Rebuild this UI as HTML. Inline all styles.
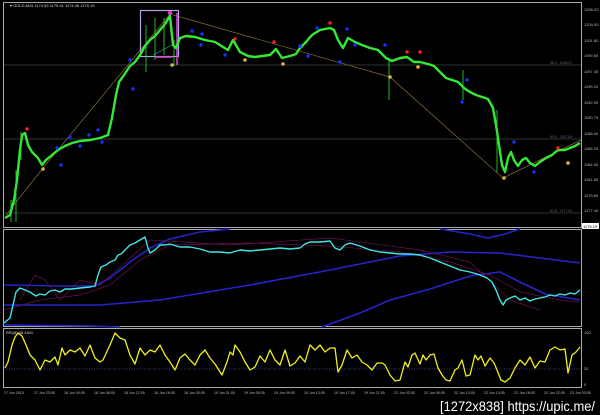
<!DOCTYPE html>
<html><head><meta charset="utf-8"><style>
html,body{margin:0;padding:0;background:#000;width:600px;height:415px;overflow:hidden}
svg{display:block}
.ax{font-family:"Liberation Sans",sans-serif;font-size:4px;fill:#bbb}
</style></head><body>
<svg width="600" height="415" viewBox="0 0 600 415" xmlns="http://www.w3.org/2000/svg">
<rect width="600" height="415" fill="#000"/>
<rect x="3.5" y="2.5" width="578" height="225" fill="none" stroke="#aaa" stroke-width="1"/>
<rect x="3.5" y="229.5" width="578" height="97" fill="none" stroke="#aaa" stroke-width="1"/>
<rect x="3.5" y="328.5" width="578" height="59" fill="none" stroke="#aaa" stroke-width="1"/>
<g stroke="#3a4444" stroke-width="0.8">
<line x1="4" y1="65" x2="581" y2="65"/><line x1="4" y1="139" x2="581" y2="139"/><line x1="4" y1="213" x2="581" y2="213"/>
</g>
<g class="ax" style="font-size:3.5px;fill:#667">
<text x="550" y="64">38.2 - 1198.27</text><text x="550" y="138">50.0 - 1187.64</text><text x="550" y="212">61.8 - 1177.01</text>
</g>
<text x="10" y="7" class="ax" style="font-size:4px;fill:#ddd">▾ GOLD,M15  1174.53  1175.41  1174.46  1175.19</text>
<polyline fill="none" stroke="#8a6d3b" stroke-width="0.7" points="6,215 43,168 170,14 390,77 503,178 581,140"/>
<rect x="140.5" y="10.5" width="38" height="46" fill="none" stroke="#b9a0e0" stroke-width="1.2"/>
<line x1="177" y1="13" x2="177" y2="65" stroke="#e040e0" stroke-width="1.5"/>
<line x1="155" y1="57" x2="172" y2="57" stroke="#e040e0" stroke-width="1.5"/>
<line x1="153" y1="55" x2="172" y2="45" stroke="#3aa" stroke-width="0.6"/>
<polyline fill="none" stroke="#36e836" stroke-width="2.4" stroke-linejoin="round" points="5,218 10,215 14,200 17,180 20,150 22,135 25,133 28,145 32,152 38,158 42,165 46,160 52,155 58,150 65,146 72,143 80,141 90,140 100,138 108,135 112,118 116,95 119,82 124,75 130,66 135,62 140,55 145,46 150,40 155,36 160,30 165,24 170,16 173,45 176,48 180,38 186,36 195,37 205,40 215,42 223,47 228,50 233,40 240,52 248,56 255,57 262,56 270,55 276,49 282,58 290,56 296,54 300,48 306,42 312,35 320,30 330,28 334,30 338,40 343,48 348,38 355,42 362,45 370,48 378,50 386,58 392,61 400,58 407,57 414,62 420,62 428,64 434,66 440,72 446,78 452,80 458,82 464,88 470,92 476,95 482,97 488,99 493,108 496,125 499,145 502,165 505,172 508,158 511,152 514,160 518,166 522,160 526,158 530,163 535,166 540,162 546,158 552,155 558,150 565,150 570,148 575,146 580,143"/>
<g stroke="#2ee02e" stroke-width="0.8">
<line x1="11" y1="200" x2="11" y2="222"/><line x1="16" y1="170" x2="16" y2="222"/><line x1="21" y1="132" x2="21" y2="160"/><line x1="146" y1="25" x2="146" y2="72"/><line x1="155" y1="18" x2="155" y2="60"/><line x1="164" y1="18" x2="164" y2="55"/><line x1="174" y1="40" x2="174" y2="66"/><line x1="389" y1="60" x2="389" y2="100"/><line x1="463" y1="70" x2="463" y2="100"/><line x1="497" y1="110" x2="497" y2="172"/>
</g>
<g fill="#1530ff"><circle cx="57" cy="148" r="1.7"/><circle cx="61" cy="165" r="1.7"/><circle cx="70" cy="137" r="1.7"/><circle cx="80" cy="146" r="1.7"/><circle cx="89" cy="135" r="1.7"/><circle cx="98" cy="130" r="1.7"/><circle cx="102" cy="142" r="1.7"/><circle cx="130" cy="60" r="1.7"/><circle cx="133" cy="89" r="1.7"/><circle cx="192" cy="31" r="1.7"/><circle cx="202" cy="34" r="1.7"/><circle cx="201" cy="45" r="1.7"/><circle cx="225" cy="55" r="1.7"/><circle cx="300" cy="46" r="1.7"/><circle cx="308" cy="56" r="1.7"/><circle cx="317" cy="28" r="1.7"/><circle cx="340" cy="62" r="1.7"/><circle cx="347" cy="29" r="1.7"/><circle cx="355" cy="45" r="1.7"/><circle cx="385" cy="45" r="1.7"/><circle cx="462" cy="102" r="1.7"/><circle cx="467" cy="80" r="1.7"/><circle cx="514" cy="142" r="1.7"/><circle cx="534" cy="172" r="1.7"/><circle cx="568" cy="163" r="1.7"/></g>
<g fill="#ff2020"><circle cx="27" cy="129" r="1.7"/><circle cx="235" cy="39" r="1.7"/><circle cx="274" cy="42" r="1.7"/><circle cx="330" cy="23" r="1.7"/><circle cx="407" cy="52" r="1.7"/><circle cx="420" cy="52" r="1.7"/><circle cx="558" cy="148" r="1.7"/></g>
<g fill="#e0b040"><circle cx="43" cy="169" r="1.8"/><circle cx="172" cy="65" r="1.8"/><circle cx="245" cy="60" r="1.8"/><circle cx="283" cy="64" r="1.8"/><circle cx="390" cy="77" r="1.8"/><circle cx="418" cy="67" r="1.8"/><circle cx="504" cy="178" r="1.8"/><circle cx="568" cy="163" r="1.8"/></g>
<circle cx="170" cy="13" r="2" fill="#e040e0"/>
<g class="ax">
<text x="584" y="11">1206.20</text><text x="584" y="26">1204.00</text><text x="584" y="42">1201.80</text><text x="584" y="57">1199.50</text><text x="584" y="73">1197.30</text><text x="584" y="88">1195.10</text><text x="584" y="104">1192.90</text><text x="584" y="119">1190.70</text><text x="584" y="135">1188.40</text><text x="584" y="150">1186.20</text><text x="584" y="166">1184.00</text><text x="584" y="181">1181.80</text><text x="584" y="197">1179.60</text><text x="584" y="212">1177.40</text>
<text x="584" y="334">100</text><text x="584" y="370">32</text><text x="584" y="386">0</text>
</g>
<rect x="582" y="223" width="17" height="6" fill="#fff"/><text x="583" y="228" class="ax" style="fill:#000">1175.19</text>
<g fill="none" stroke="#2424c8" stroke-width="1.6">
<polyline points="4,285 60,286 95,286 110,278 130,262 150,248 170,239 200,232 230,229"/>
<polyline points="4,305 100,305 160,300 250,285 330,270 400,256 450,252 500,253 540,258 580,263"/>
<polyline points="4,325 90,326 120,327"/>
<polyline points="322,327 360,313 390,300 430,289 470,276 500,272 520,282 545,294 580,300"/>
<polyline points="440,229 470,234 488,238 505,234 520,229"/>
</g>
<g fill="none" stroke="#6a1050" stroke-width="0.7">
<polyline points="4,310 40,300 80,295 110,285 140,260 170,245 250,243 330,246 400,252 450,262 490,275 520,292 560,300 580,302"/>
<polyline points="20,300 35,275 45,280 60,300 80,280 100,285 150,240 230,245 330,238 420,250 470,262 510,300 540,310"/>
</g>
<polyline fill="none" stroke="#3ee8e8" stroke-width="1.4" stroke-linejoin="round" points="4,323 10,318 13,305 16,292 20,288 25,290 30,292 36,296 40,294 45,295 50,291 55,290 60,292 65,289 72,289 80,288 90,287 95,286 98,275 101,267 106,265 110,262 115,260 118,255 121,254 124,251 130,245 135,243 140,240 145,237 148,248 150,253 155,250 160,245 165,245 170,244 180,247 190,247 200,249 210,252 220,252 230,253 240,250 250,251 260,250 270,249 280,248 290,249 300,248 305,244 310,242 320,242 330,241 335,248 340,250 345,245 350,243 360,246 370,250 380,252 390,253 400,254 410,254 420,255 430,258 440,262 450,266 460,270 470,272 480,275 487,278 492,282 496,290 500,300 503,305 506,300 510,298 515,296 520,300 525,298 530,301 535,299 540,298 545,297 550,295 555,296 560,294 565,295 570,293 575,294 580,290"/>
<text x="6" y="334" class="ax" style="fill:#ddd">RSI(8) 68.4401</text>
<line x1="4" y1="369" x2="581" y2="369" stroke="#5a5a9a" stroke-width="0.7" stroke-dasharray="1,1.5"/>
<polyline fill="none" stroke="#f0f020" stroke-width="1.3" stroke-linejoin="round" points="5,368 8,362 12,345 15,337 18,333 22,336 26,345 30,355 35,360 40,370 45,360 50,362 55,357 58,365 62,348 65,355 70,350 75,352 80,348 85,356 90,345 95,358 100,362 103,360 110,345 115,333 120,338 125,340 130,355 135,364 140,348 145,355 150,350 155,352 160,345 165,355 170,362 175,370 180,358 185,354 190,360 195,365 200,355 205,350 210,358 215,364 222,375 227,362 230,352 233,355 235,345 240,352 245,362 250,370 255,367 260,356 265,362 270,350 275,360 280,365 285,350 290,366 295,363 300,356 305,362 310,345 315,350 320,345 325,352 330,348 335,348 338,372 342,365 347,350 352,358 357,355 362,362 367,365 372,370 377,363 382,363 385,365 390,375 395,381 400,380 405,362 408,367 412,355 415,353 420,364 423,355 426,360 430,355 434,354 438,368 442,375 446,380 450,381 455,370 458,368 462,360 466,376 470,375 475,355 478,360 481,356 485,366 490,358 494,363 497,370 501,380 505,382 510,378 515,368 520,360 525,365 530,357 535,368 540,361 545,362 550,350 555,347 560,350 565,349 568,373 572,355 576,352 580,347"/>
<g class="ax" style="font-size:3.6px">
<text x="4" y="394">17 Jun 2015</text><text x="34" y="394">17 Jun 23:05</text><text x="64" y="394">18 Jun 04:05</text><text x="94" y="394">18 Jun 08:05</text><text x="124" y="394">18 Jun 12:05</text><text x="154" y="394">18 Jun 16:05</text><text x="184" y="394">18 Jun 20:05</text><text x="214" y="394">19 Jun 01:05</text><text x="244" y="394">19 Jun 05:05</text><text x="274" y="394">19 Jun 09:05</text><text x="304" y="394">19 Jun 13:05</text><text x="334" y="394">19 Jun 17:05</text><text x="364" y="394">19 Jun 21:05</text><text x="394" y="394">22 Jun 02:05</text><text x="424" y="394">22 Jun 06:05</text><text x="454" y="394">22 Jun 10:05</text><text x="484" y="394">22 Jun 14:05</text><text x="514" y="394">22 Jun 18:05</text><text x="544" y="394">22 Jun 22:05</text><text x="570" y="394">23 Jun 03:05</text>
</g>
<text x="440" y="411" font-family="'Liberation Sans',sans-serif" font-size="14" fill="#fff" textLength="155" lengthAdjust="spacingAndGlyphs">[1272x838] https://upic.me/</text>
</svg>
</body></html>
